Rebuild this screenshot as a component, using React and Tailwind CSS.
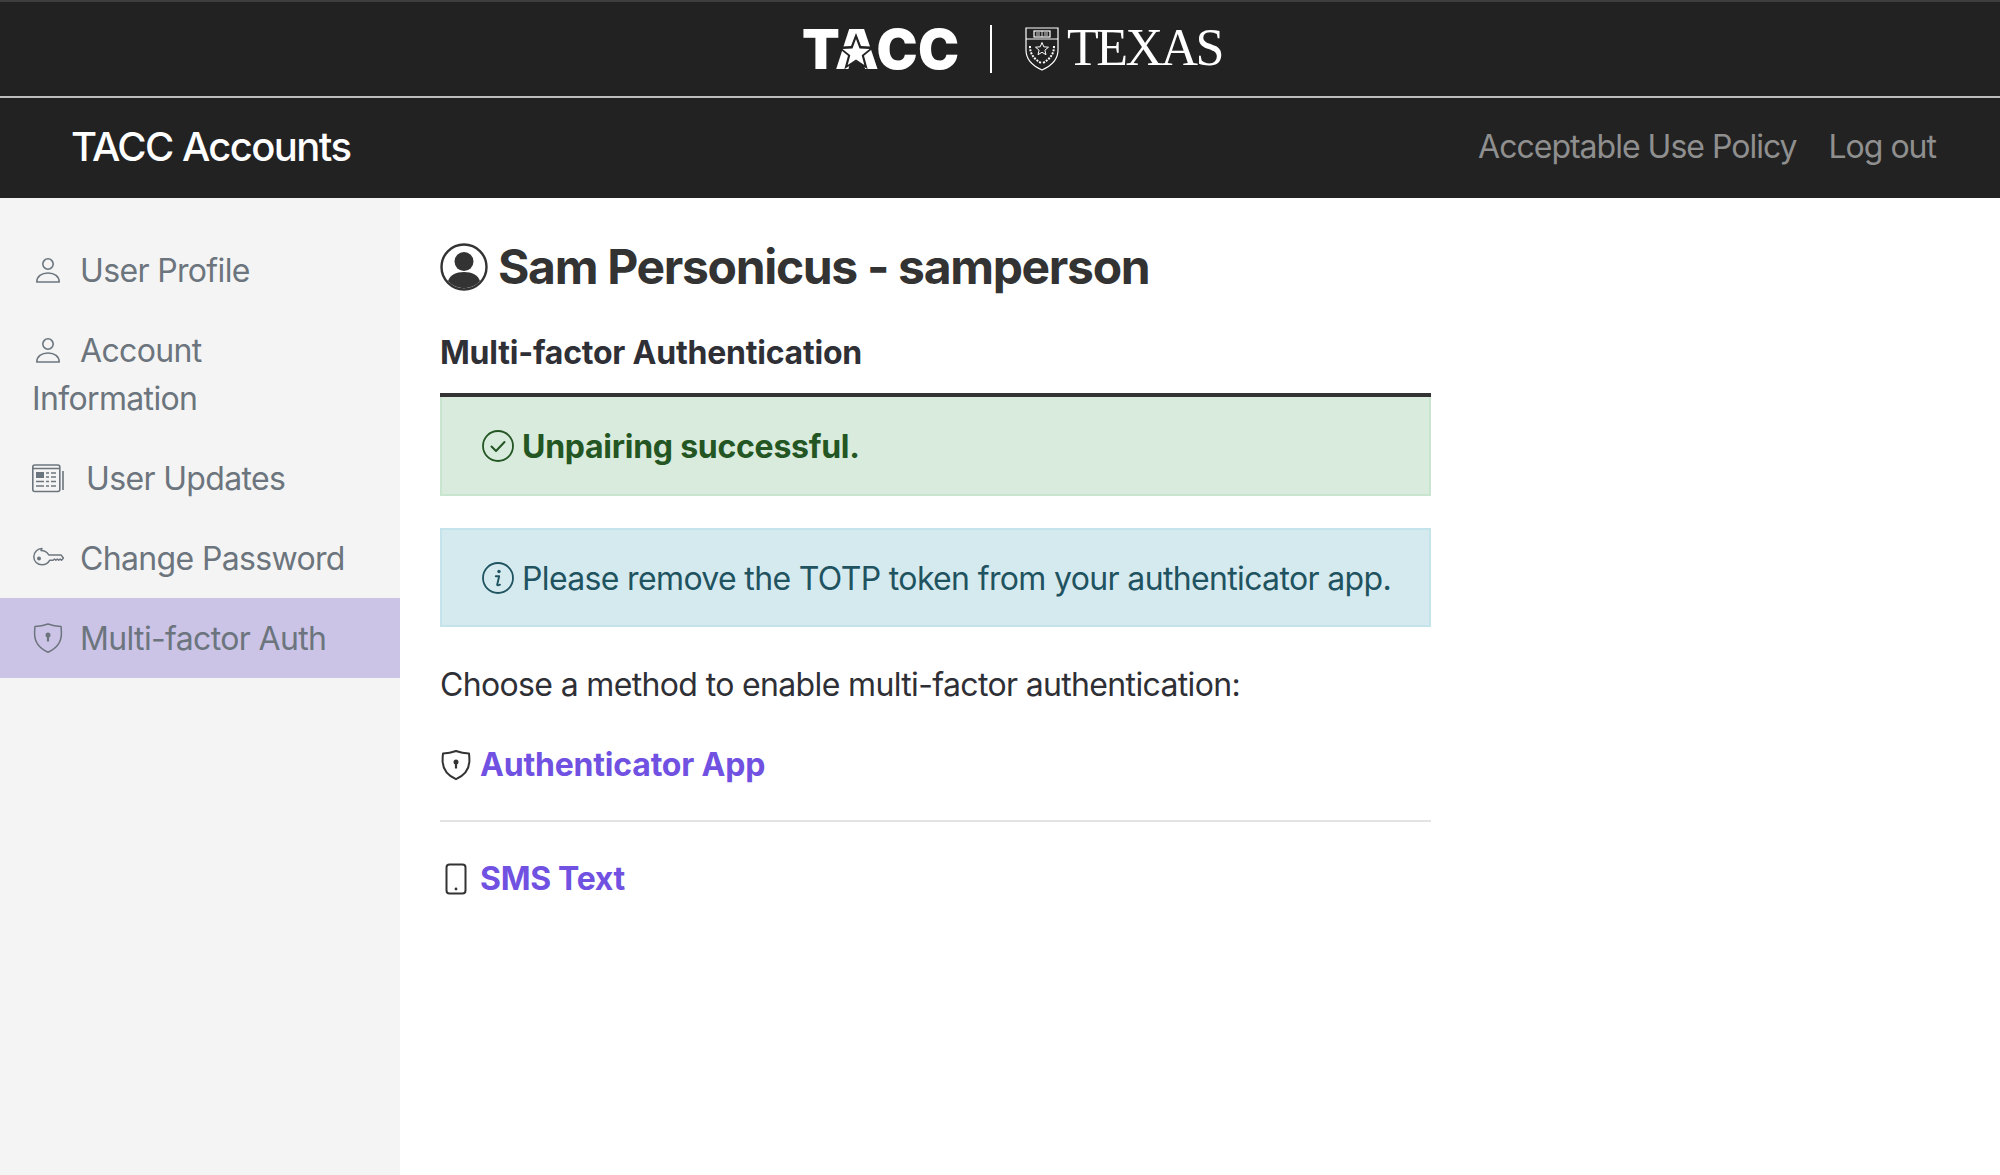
import React from 'react';

const UserIcon = () => (
  <svg viewBox="0 0 32 32" fill="none" stroke="currentColor" strokeWidth="1.6" className="inline-block w-8 h-8 align-middle mr-4 -mt-[6px]">
    <circle cx="16" cy="10" r="5.2" />
    <path d="M4.8 28c0-5.4 4.6-9 11.2-9s11.2 3.6 11.2 9z" strokeLinejoin="round" />
  </svg>
);

const NewsIcon = () => (
  <svg viewBox="0 0 32 32" fill="none" stroke="currentColor" strokeWidth="1.6" className="inline-block w-8 h-8 align-middle mr-[22px] -mt-[6px]">
    <rect x="0.8" y="3" width="27" height="26.5" rx="2" />
    <path d="M0.8 6.5h27M31 9v19" />
    <rect x="4" y="10" width="8" height="6" fill="currentColor" stroke="none" />
    <path d="M14 11h3M19 11h5M14 15h3M19 15h5M4 19.5h8M14 19.5h3M19 19.5h5M4 24h8M14 24h3M19 24h5" strokeWidth="1.7" />
  </svg>
);

const KeyIcon = () => (
  <svg viewBox="0 0 32 32" fill="none" stroke="currentColor" strokeWidth="1.5" className="inline-block w-8 h-8 align-middle mr-4 -mt-[6px]">
    <path d="M9 8.500c3.500 0 6.300 1.800 7.800 4.500H29l2.500 3-2 2.200-1.400-1.200-1.400 1.200-1.400-1.200-1.400 1.200-1.400-1.200-1.400 1.200h-3.300c-1.500 2.800-4.300 4.600-7.800 4.600-4.600 0-8.200-3.600-8.200-8.100s3.600-8.200 8.200-8.200z" strokeLinejoin="round" />
    <circle cx="7" cy="16.500" r="2" fill="currentColor" stroke="none" />
  </svg>
);

const ShieldIcon = ({ className }) => (
  <svg viewBox="0 0 32 32" fill="none" stroke="currentColor" strokeWidth="2" className={className}>
    <path d="M16 2c4 1.6 8.500 2.400 13 2.400 0 0 .4 3.500.4 7 0 8-5 15-13.400 18.800C7.600 26.400 2.600 19.400 2.600 11.400c0-3.500.4-7 .4-7C7.500 4.400 12 3.600 16 2z" strokeLinejoin="round" />
    <circle cx="16" cy="13" r="2.500" fill="currentColor" stroke="none" />
    <rect x="14.900" y="13" width="2.200" height="6.500" fill="currentColor" stroke="none" />
  </svg>
);

const PhoneIcon = () => (
  <svg viewBox="0 0 32 32" fill="none" stroke="currentColor" strokeWidth="2" className="inline-block w-8 h-8 align-middle mr-2 -mt-1">
    <rect x="6.500" y="1.500" width="19" height="29" rx="3" />
    <circle cx="16" cy="26" r="1.400" fill="currentColor" stroke="none" />
  </svg>
);

const PersonCircle = () => (
  <svg viewBox="0 0 48 48" className="w-12 h-12 shrink-0 text-[#333]" fill="none">
    <circle cx="24" cy="24" r="22.500" stroke="currentColor" strokeWidth="2.400" />
    <circle cx="24" cy="18.500" r="9.500" fill="currentColor" />
    <path d="M8 38c2-6 8-9 16-9s14 3 16 9c-4 4.500-9.500 7-16 7s-12-2.500-16-7z" fill="currentColor" />
  </svg>
);

const CheckCircle = () => (
  <svg viewBox="0 0 32 32" fill="none" stroke="currentColor" strokeWidth="1.8" className="w-8 h-8 shrink-0">
    <circle cx="16" cy="16" r="15" />
    <path d="M9.500 16.500l4.500 4.500 8.500-9" strokeLinecap="round" strokeLinejoin="round" strokeWidth="2" />
  </svg>
);

const InfoCircle = () => (
  <svg viewBox="0 0 32 32" fill="none" stroke="currentColor" strokeWidth="1.8" className="w-8 h-8 shrink-0">
    <circle cx="16" cy="16" r="15" />
    <circle cx="17" cy="9.500" r="1.700" fill="currentColor" stroke="none" />
    <path d="M13.800 14.200h3.400l-2 8.300c-.2.900.8 1.200 2.800.2" strokeWidth="1.900" strokeLinecap="round" strokeLinejoin="round" />
  </svg>
);

const TexasShield = () => (
  <svg viewBox="0 0 34 44" fill="none" stroke="white" className="w-[34px] h-[44px] shrink-0">
    <path d="M1 1h32v22c0 10-7 16-16 20C8 39 1 33 1 23z" strokeWidth="1.200" />
    <path d="M1 12h32" strokeWidth="1" />
    <rect x="9" y="4" width="16" height="6" strokeWidth="1.200" />
    <path d="M17 4v6M11 6h4M11 8h4M19 6h4M19 8h4" strokeWidth="0.800" />
    <path d="M17 15.500l1.800 4.300 4.700.4-3.600 3 1.100 4.500-4-2.400-4 2.400 1.100-4.500-3.600-3 4.700-.4z" strokeWidth="1" />
    <path d="M5 19c0 8 4 13 11 17M29 19c0 8-4 13-11 17" strokeWidth="2" strokeDasharray="2 1.200" />
  </svg>
);

const sideItems = [
  { label: 'User Profile', icon: <UserIcon /> },
  { label: 'Account Information', icon: <UserIcon /> },
  { label: 'User Updates', icon: <NewsIcon /> },
  { label: 'Change Password', icon: <KeyIcon /> },
  { label: 'Multi-factor Auth', icon: <ShieldIcon className="inline-block w-8 h-8 align-middle mr-4 -mt-[6px] [stroke-width:1.500]" />, active: true },
];

export default function App() {
  return (
    <div className="h-screen flex flex-col bg-white font-['Inter',sans-serif] overflow-hidden">
      {/* Logo bar */}
      <div className="h-[98px] shrink-0 bg-[#222222] border-t-2 border-t-[#3e3e3e] border-b-2 border-b-[#bdbdbd] flex items-center justify-center">
        <div className="relative flex items-center w-[420px] ml-6">
          <span className="text-[55px] leading-none font-black text-white tracking-[0.400px] w-[191px]">TACC</span>
          <svg viewBox="0 0 40 40" className="absolute left-[34px] top-[10px] w-10 h-10">
            <path d="M20 1l5 13 14 .8-11 8.900 3.700 13.500L20 29.500 8.300 37.200 12 23.700 1 14.800 15 14z" fill="#222222" />
            <path d="M20 7l3.500 9.500 10 .5-7.800 6.200 2.600 9.800L20 27.500 11.700 33l2.600-9.800L6.500 17l10-.5z" fill="white" />
          </svg>
          <div className="w-0.5 h-12 bg-white mr-[33px]" />
          <TexasShield />
          <span className="ml-[8px] -mt-0.5 font-['Liberation_Serif',serif] text-[52px] leading-none text-white tracking-[-2.500px]">TEXAS</span>
        </div>
      </div>

      {/* Site nav */}
      <div className="h-[100px] shrink-0 bg-[#222222] flex items-center justify-between pl-[71px] pr-[64px]">
        <div className="text-[40px] leading-none text-white font-medium tracking-[-1.600px] -mt-0.5">TACC Accounts</div>
        <div className="flex items-center gap-8 text-[32px] text-[#8f8f8f] tracking-[-1px] -mt-0.5">
          <a href="#">Acceptable Use Policy</a>
          <a href="#">Log out</a>
        </div>
      </div>

      <div className="flex flex-1 min-h-0">
        {/* Sidebar */}
        <div className="w-[400px] shrink-0 bg-[#f4f4f4] pt-8 text-[32px] leading-[48px] text-[#6c757d] tracking-[-0.650px]">
          {sideItems.map((item) => (
            <div key={item.label} className={`pt-[17px] pb-[15px] pl-8 pr-8 ${item.active ? 'bg-[#cbc4e7]' : ''}`}>
              {item.icon}
              {item.label}
            </div>
          ))}
        </div>

        {/* Main */}
        <div className="flex-1 pl-10 pt-[44px] tracking-[-0.650px]">
          <div className="w-[991px]">
            <div className="flex items-center gap-[10px] h-[50px]">
              <PersonCircle />
              <h1 className="text-[48px] leading-none font-bold text-[#333333] tracking-[-1.330px]">Sam Personicus - samperson</h1>
            </div>
            <h2 className="mt-[37px] text-[32px] leading-[48px] font-bold text-[#2f2f36] tracking-[-0.220px]">Multi-factor Authentication</h2>
            <div className="mt-4 border-t-4 border-t-[#333333]">
              <div className="h-[99px] px-10 flex items-center gap-2 bg-[#d9ebdd] border-2 border-t-0 border-[#c9e5cf] text-[#235623] text-[32px] font-bold tracking-[-0.260px]">
                <CheckCircle />
                <span className="pt-0.5">Unpairing successful.</span>
              </div>
            </div>
            <div className="mt-8 h-[99px] px-10 flex items-center gap-2 bg-[#d5eaef] border-2 border-[#c5e3ea] text-[#1f5360] text-[32px]">
              <InfoCircle />
              <span className="whitespace-nowrap pt-0.5">Please remove the TOTP token from your authenticator app.</span>
            </div>
            <p className="mt-[34px] text-[32px] leading-[48px] text-[#2f2f36]">Choose a method to enable multi-factor authentication:</p>
            <div className="mt-8 text-[32px] leading-[48px] font-bold text-[#7051e1] tracking-[-0.200px]">
              <span className="text-[#333333]"><ShieldIcon className="inline-block w-8 h-8 align-middle mr-2 -mt-1" /></span>
              <a href="#">Authenticator App</a>
            </div>
            <div className="mt-[31px] border-t-2 border-[#e3e3e3]" />
            <div className="mt-[33px] text-[32px] leading-[48px] font-bold text-[#7051e1] tracking-[-0.300px]">
              <span className="text-[#333333]"><PhoneIcon /></span>
              <a href="#">SMS Text</a>
            </div>
          </div>
        </div>
      </div>
    </div>
  );
}
